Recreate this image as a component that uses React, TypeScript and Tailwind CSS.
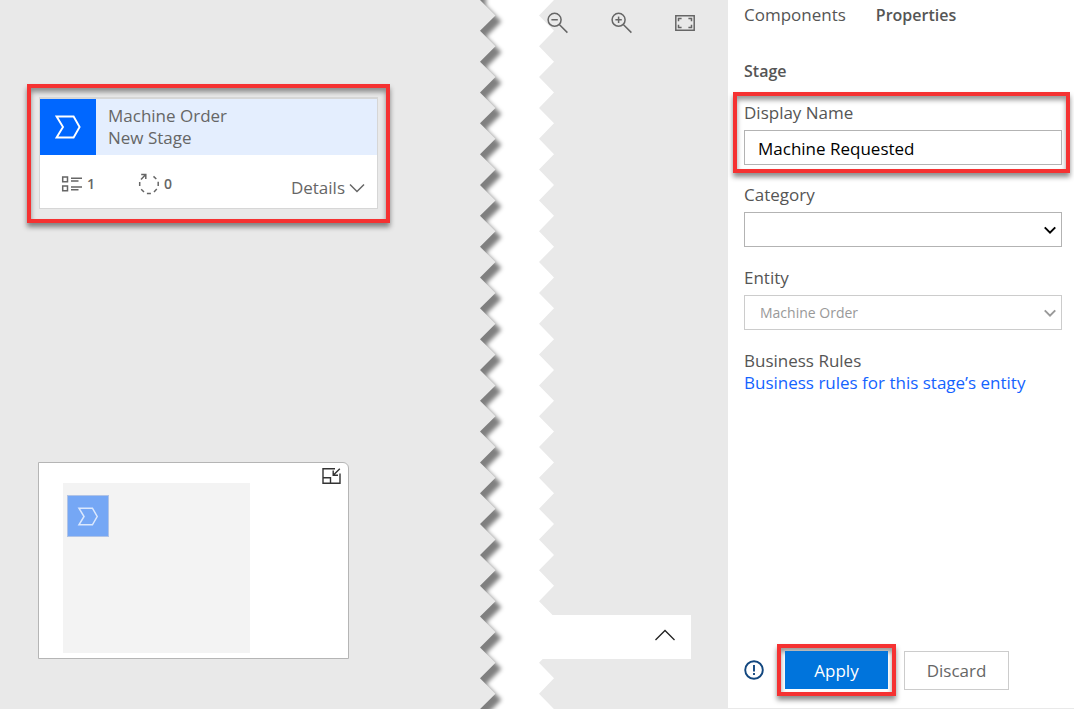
import { useState } from "react";
import type { ReactNode } from "react";

const TOOTH = 30.83;
const TEETH = 90;

function zigzag(xValley: number, xPeak: number, startAtPeak: boolean) {
  const points: string[] = [];
  for (let i = 0; i <= TEETH * 2; i++) {
    const onPeak = i % 2 === (startAtPeak ? 0 : 1);
    points.push(`${onPeak ? xPeak : xValley},${(i * TOOTH) / 2}`);
  }
  return points.join(" ");
}

const TEAR_END = TOOTH * TEETH;

function TornEdge() {
  const left = zigzag(10, 25.5, false);
  const right = zigzag(69, 84, true);
  return (
    <div className="relative w-[84px] shrink-0 self-stretch overflow-hidden" aria-hidden="true">
      <svg className="absolute inset-0 h-full w-full" preserveAspectRatio="none">
        <defs>
          <filter id="soft" x="-50%" y="-5%" width="200%" height="110%">
            <feGaussianBlur stdDeviation="2.1" />
          </filter>
        </defs>
        <rect width="84" height="100%" fill="#fff" />
        <polygon
          points={`-30,-40 10,-40 10,0 ${left} -30,${TEAR_END}`}
          fill="#000"
          fillOpacity="0.5"
          transform="translate(6 6)"
          filter="url(#soft)"
        />
        <polygon points={`-30,0 ${left} -30,${TEAR_END}`} fill="#e9e9e9" />
        <polygon points={`100,0 ${right} 100,${TEAR_END}`} fill="#e9e9e9" />
      </svg>
    </div>
  );
}

function Highlight({ className, children }: { className: string; children: ReactNode }) {
  return (
    <div
      className={`border-4 border-[#f53232] shadow-[0_4px_5px_rgba(0,0,0,0.45),inset_0_4px_5px_rgba(0,0,0,0.4)] ${className}`}
    >
      {children}
    </div>
  );
}

function StageGlyph({ className }: { className: string }) {
  return (
    <svg viewBox="0 0 26 24" className={className} fill="none" stroke="currentColor" strokeWidth="1.9">
      <path d="M1.6 1.5H18.6L24.6 12L18.6 22.5H1.6L8 12Z" />
    </svg>
  );
}

function Chevron({ className, width = 1.5 }: { className: string; width?: number }) {
  return (
    <svg viewBox="0 0 16 10" className={className} fill="none" stroke="currentColor" strokeWidth={width}>
      <path d="M1 1.5L8 8.5L15 1.5" />
    </svg>
  );
}

function StageCard() {
  return (
    <Highlight className="ml-[27px] w-[363px] px-2 pt-[9px] pb-[10px]">
      <section className="border border-t-2 border-[#d6d6d6] bg-white text-[#666]">
        <div className="flex h-14 items-center bg-[#e4eefe]">
          <div className="flex size-14 shrink-0 items-center justify-center bg-[#0067ff] text-white">
            <StageGlyph className="h-6 w-[26px]" />
          </div>
          <div className="ml-3 leading-[22px]">
            <p>Machine Order</p>
            <p>New Stage</p>
          </div>
        </div>
        <div className="flex h-[53px] items-center pt-1 pr-3 pl-[21px] text-sm font-semibold">
          <svg viewBox="0 0 22 18" className="h-[18px] w-[22px]" fill="none" stroke="currentColor" strokeWidth="1.5">
            <path d="M1.7 2h4.8v4.8h-4.8zM1.7 10.9h4.8v4.8h-4.8zM10 3.2h11M10 5.9h7.5M10 12h11M10 14.8h7.5" />
          </svg>
          <span className="ml-1">1</span>
          <svg viewBox="0 0 22 22" className="ml-[43px] size-[22px]" fill="none" stroke="currentColor" strokeWidth="1.5">
            <path d="M15.5 3.4L18.3 6M20.2 8.8V13M18.8 16L16 18.9M12.9 20.5H8.9M6 19L3.2 16.2M1.7 13V9M3 6.4L7.5 1.7M3.2 1.4H7.8V6" />
          </svg>
          <span className="ml-1">0</span>
          <button type="button" className="ml-auto flex items-center gap-1 pt-2 text-[17px] leading-[22px] font-normal">
            Details
            <Chevron className="h-[10px] w-4" />
          </button>
        </div>
      </section>
    </Highlight>
  );
}

function Minimap() {
  return (
    <section className="mb-[50px] ml-[38px] flex h-[197px] w-[311px] justify-between rounded-tr-md border border-[#b5b5b5] bg-white pr-[7px] pl-6">
      <div className="mt-5 mb-[5px] w-[187px] bg-[#f3f3f3] pt-3 pl-1">
        <div className="flex size-[42px] items-center justify-center border border-[#b0c3e6] bg-[#75a7f5] text-[#dbe8fd]">
          <StageGlyph className="h-[19px] w-[22px]" />
        </div>
      </div>
      <button type="button" aria-label="Collapse minimap" className="mt-1 h-[18px] w-[19px] self-start text-[#333]">
        <svg viewBox="0 0 19 18" className="h-[18px] w-[19px]" fill="none" stroke="currentColor" strokeWidth="1.4">
          <path d="M13 1.7H1V16.3H18V6.5M1 10.7H8.5V16.3M17.8 1.8L11.5 8M11.2 3.5V8.2H16" />
        </svg>
      </button>
    </section>
  );
}

function ZoomButton({ label, plus }: { label: string; plus?: boolean }) {
  return (
    <button type="button" aria-label={label} className="size-[22px]">
      <svg viewBox="0 0 22 22" className="size-[22px]" fill="none" stroke="currentColor" strokeWidth="1.5">
        <circle cx="7.6" cy="7.8" r="6.5" />
        <path d="M12.3 12.5L20.4 20.6M4.4 7.8H10.8" />
        {plus && <path d="M7.6 4.6V11" />}
      </svg>
    </button>
  );
}

function CanvasTools() {
  return (
    <div className="relative -ml-[15px] flex min-w-0 flex-1 flex-col justify-between">
      <div className="flex items-start gap-[42px] pt-3 pl-2 text-[#666]">
        <ZoomButton label="Zoom out" />
        <ZoomButton label="Zoom in" plus />
        <button type="button" aria-label="Fit to screen" className="mt-[3px] h-4 w-5">
          <svg viewBox="0 0 20 16" className="h-4 w-5" fill="none" stroke="currentColor" strokeWidth="1.5">
            <path d="M0.8 0.8H19.2V15.2H0.8ZM3.5 6.2V3.5H6.6M13.4 3.5H16.5V6.2M16.5 9.8V12.5H13.4M6.6 12.5H3.5V9.8" />
          </svg>
        </button>
      </div>
      <div className="mr-[37px] mb-[50px] flex h-11 items-center justify-end bg-white pr-[15px] pb-1">
        <button type="button" aria-label="Expand" className="text-[#222]">
          <svg viewBox="0 0 22 12" className="h-3 w-[22px]" fill="none" stroke="currentColor" strokeWidth="1.3">
            <path d="M1.5 11L11 1.5L20.5 11" />
          </svg>
        </button>
      </div>
    </div>
  );
}

function SelectField({
  id,
  label,
  options,
  disabled,
}: {
  id: string;
  label: string;
  options: string[];
  disabled?: boolean;
}) {
  return (
    <div className="mb-5 flex flex-col gap-[6px]">
      <label htmlFor={id}>{label}</label>
      <div className={`relative ${disabled ? "text-[#999]" : "text-black"}`}>
        <select
          id={id}
          disabled={disabled}
          className={`block h-[35px] w-full appearance-none border bg-white pr-8 pl-[15px] text-sm opacity-100 ${
            disabled ? "border-[#ccc]" : "border-[#b3b3b3]"
          }`}
        >
          {options.map((option) => (
            <option key={option}>{option}</option>
          ))}
        </select>
        <Chevron className="pointer-events-none absolute top-[14px] right-[6px] h-2 w-3" width={2.6} />
      </div>
    </div>
  );
}

function PropertiesPanel() {
  const [name, setName] = useState("Machine Requested");
  return (
    <aside className="flex w-[346px] shrink-0 flex-col border-b border-[#e9e9e9] bg-white pt-1 pr-3 pl-4 text-[#555]">
      <nav className="flex gap-[30px]">
        <button type="button">Components</button>
        <button type="button" className="text-base leading-[22px] font-semibold">Properties</button>
      </nav>
      <h2 className="mt-[34px] mb-[10px] text-base leading-[22px] font-semibold">Stage</h2>
      <Highlight className="-mr-2 -ml-[11px] mb-[11px] pt-[6px] pr-1 pb-1 pl-[7px]">
        <div className="flex flex-col gap-[6px]">
          <label htmlFor="display-name">Display Name</label>
          <input
            id="display-name"
            value={name}
            onChange={(event) => setName(event.target.value)}
            className="h-[35px] w-full border border-[#b3b3b3] bg-white px-[13px] pt-[2px] text-black outline-none"
          />
        </div>
      </Highlight>
      <SelectField id="category" label="Category" options={[""]} />
      <SelectField id="entity" label="Entity" options={["Machine Order"]} disabled />
      <p>Business Rules</p>
      <a href="#rules" className="self-start text-[#1463ff]">Business rules for this stage’s entity</a>
      <div className="mt-auto mb-3 flex items-center">
        <svg viewBox="0 0 20 20" className="size-5 text-[#12477f]" fill="none" stroke="currentColor" strokeWidth="1.9" role="img" aria-label="Information">
          <circle cx="10" cy="10" r="8.8" />
          <path d="M10 5V11.5M10 13V15" />
        </svg>
        <Highlight className="ml-[13px] px-1 py-[3px]">
          <button type="button" className="block h-[38px] w-[103px] bg-[#0074dc] pt-[2px] text-white">Apply</button>
        </Highlight>
        <button type="button" className="ml-2 h-[39px] w-[105px] border border-[#ccc] bg-white pt-[2px] text-[#666]">Discard</button>
      </div>
    </aside>
  );
}

export default function App() {
  return (
    <main className="flex min-h-screen bg-[#e9e9e9] font-['Open_Sans','Noto_Sans',sans-serif] text-[17px] leading-[22px]">
      <div className="flex w-[470px] shrink-0 flex-col justify-between pt-[84px]">
        <StageCard />
        <Minimap />
      </div>
      <TornEdge />
      <CanvasTools />
      <PropertiesPanel />
    </main>
  );
}
